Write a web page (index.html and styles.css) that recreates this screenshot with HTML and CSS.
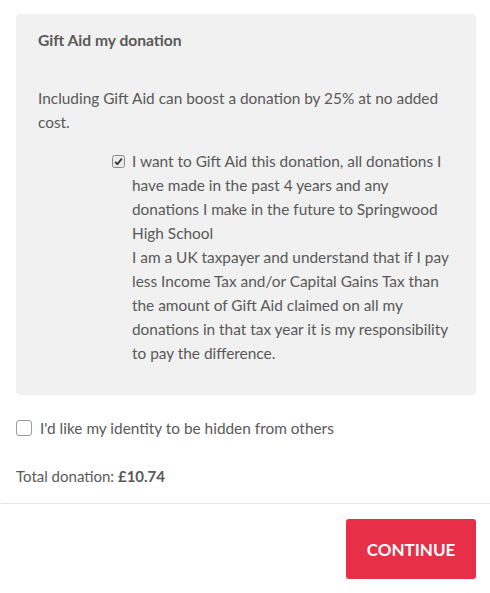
FILE: index.html
```html
<!DOCTYPE html>
<html>
<head>
<meta charset="utf-8">
<link rel="stylesheet" href="styles.css">
</head>
<body>
<div class="page">
  <section class="gift-box">
    <h3 class="gift-title">Gift Aid my donation</h3>
    <p class="gift-intro">Including Gift Aid can boost a donation by 25% at no added cost.</p>
    <div class="gift-declare">
      <span class="small-check"><svg width="13" height="13" viewBox="0 0 13 13"><rect x="0.5" y="0.5" width="12" height="12" rx="2" fill="#e9e9e9" stroke="#8a8a8a"/><path d="M3.2 6.8 L5.4 9.2 L9.8 3.6" fill="none" stroke="#333" stroke-width="1.8"/></svg></span>
      <div class="declare-text">I want to Gift Aid this donation, all donations I have made in the past 4 years and any donations I make in the future to Springwood High School<br>I am a UK taxpayer and understand that if I pay less Income Tax and/or Capital Gains Tax than the amount of Gift Aid claimed on all my donations in that tax year it is my responsibility to pay the difference.</div>
    </div>
  </section>
  <label class="anon-row"><span class="big-check"></span>I'd like my identity to be hidden from others</label>
  <div class="total">Total donation: <strong>£10.74</strong></div>
</div>
<div class="divider"></div>
<div class="actions"><button class="continue">CONTINUE</button></div>
</body>
</html>
```
FILE: styles.css
```css
html, body { margin: 0; padding: 0; background: #fff; }
body { font-family: "Lato", "Open Sans", sans-serif; color: #595959; font-size: 15.4px; }
.page { padding: 14px 14px 0 16px; }
.gift-box { background: #f1f1f1; border-radius: 4px; padding: 14px 22px 30px 22px; }
.gift-title { margin: 0; font-size: 15.6px; font-weight: 700; line-height: 24px; padding-top: 0; }
.gift-intro { margin: 34px 0 0 0; line-height: 24px; }
.gift-declare { display: flex; margin-top: 15px; padding-left: 74px; gap: 7px; }
.small-check { flex: none; padding-top: 6px; line-height: 0; }
.declare-text { line-height: 24px; }
.anon-row { display: flex; align-items: center; gap: 8px; margin-top: 21px; line-height: 24px; }
.big-check { width: 14px; height: 14px; border: 1px solid #9a9a9a; border-radius: 3px; background: #fff; }
.total { margin-top: 24px; line-height: 24px; font-size: 15px; }
.total strong { font-weight: 700; }
.divider { height: 1px; background: #e6e6e6; margin: 15px 0 0 1px; }
.actions { display: flex; justify-content: flex-end; padding: 15px 14px 0 0; }
.continue { width: 130px; height: 60px; background: #e72f47; color: #fff; border: 0; border-radius: 3px; font-family: "Lato", sans-serif; font-weight: 700; font-size: 17px; }
```
